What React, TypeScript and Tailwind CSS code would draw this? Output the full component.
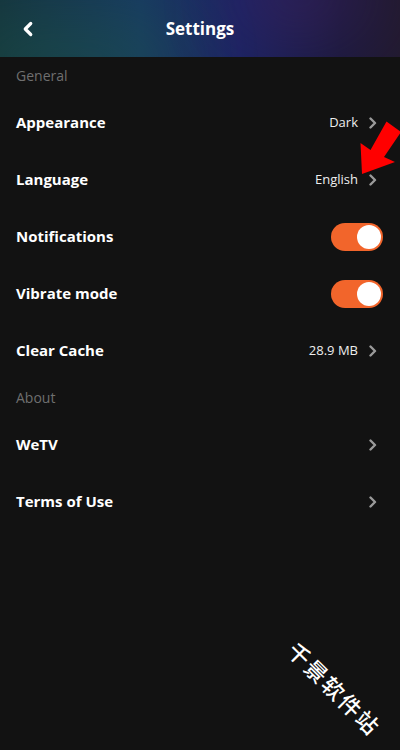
import { ChevronLeft } from 'lucide-react';

type Row =
  | { label: string; kind: 'link'; value?: string }
  | { label: string; kind: 'toggle'; on: boolean };

const general: Row[] = [
  { label: 'Appearance', kind: 'link', value: 'Dark' },
  { label: 'Language', kind: 'link', value: 'English' },
  { label: 'Notifications', kind: 'toggle', on: true },
  { label: 'Vibrate mode', kind: 'toggle', on: true },
  { label: 'Clear Cache', kind: 'link', value: '28.9 MB' },
];

const about: Row[] = [
  { label: 'WeTV', kind: 'link' },
  { label: 'Terms of Use', kind: 'link' },
];

function Chevron() {
  return (
    <svg width="8" height="12" viewBox="0 0 8 12" fill="none">
      <path d="M1.5 1.5 L6 6 L1.5 10.5" stroke="#9a9a9a" strokeWidth="2.4" strokeLinecap="round" strokeLinejoin="round" />
    </svg>
  );
}

function Toggle({ on }: { on: boolean }) {
  return (
    <div className={`w-[52px] h-[28px] rounded-full flex items-center px-[2px] ${on ? 'bg-[#f2652b] justify-end' : 'bg-[#444] justify-start'}`}>
      <div className="w-[24px] h-[24px] rounded-full bg-white" />
    </div>
  );
}

function SettingRow({ row }: { row: Row }) {
  return (
    <div className={`h-[57px] flex items-center justify-between pl-4 ${row.kind === 'toggle' ? 'pr-[17px]' : 'pr-[23px]'}`}>
      <span className="text-[15px] font-bold text-white">{row.label}</span>
      {row.kind === 'toggle' ? (
        <Toggle on={row.on} />
      ) : (
        <div className="flex items-center gap-[11px]">
          {row.value && <span className="text-[13px] text-[#eeeeee]">{row.value}</span>}
          <Chevron />
        </div>
      )}
    </div>
  );
}

function SectionLabel({ text }: { text: string }) {
  return (
    <div className="h-[37px] flex items-center pl-4">
      <span className="text-[14px] text-[#6f6f6f]">{text}</span>
    </div>
  );
}

export default function App() {
  return (
    <div
      className="relative w-[400px] h-[750px] overflow-hidden bg-[#121212]"
      style={{ fontFamily: '"Open Sans", "Noto Sans CJK SC", sans-serif' }}
    >
      {/* header */}
      <div className="relative h-[57px] flex items-center justify-center overflow-hidden bg-[linear-gradient(90deg,#15343f_0%,#183a62_35%,#1c2363_60%,#1c1a3e_85%,#221a30_100%)]">
        <div className="absolute -left-10 top-[30px] w-[220px] h-[60px] rounded-full bg-[#1d5a45] opacity-60 blur-2xl" />
        <div className="absolute right-[40px] -top-[30px] w-[120px] h-[50px] rounded-full bg-[#4a2366] opacity-70 blur-2xl" />
        <ChevronLeft size={22} strokeWidth={3.5} className="absolute left-[17px] text-white" />
        <span className="relative text-[17px] font-bold text-white">Settings</span>
      </div>

      <SectionLabel text="General" />
      {general.map((r) => (
        <SettingRow key={r.label} row={r} />
      ))}
      <SectionLabel text="About" />
      {about.map((r) => (
        <SettingRow key={r.label} row={r} />
      ))}

      {/* red arrow annotation */}
      <svg className="absolute left-[340px] top-[100px]" width="60" height="80" viewBox="340 100 60 80">
        <polygon points="362,174 360.5,143 370.5,150 386.5,121.5 401,132 384,157 395,162" fill="#ff0000" />
      </svg>

      {/* watermark */}
      <div className="absolute left-[334px] top-[689px] -translate-x-1/2 -translate-y-1/2 rotate-45 text-[22px] font-medium text-white tracking-[2px] whitespace-nowrap">
        千景软件站
      </div>
    </div>
  );
}
